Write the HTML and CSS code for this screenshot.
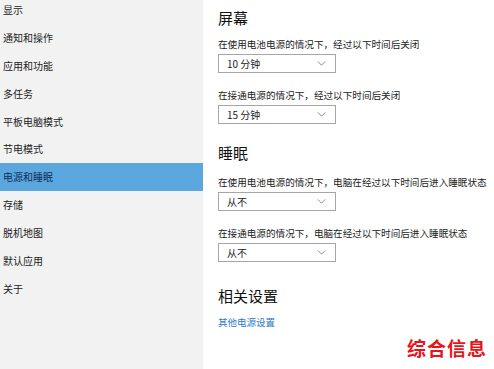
FILE: index.html
```html
<!DOCTYPE html>
<html>
<head>
    <link rel="stylesheet" href="styles.css">
</head>
<body>
    <div class="window">
        <div class="sidebar">
            <div class="nav-item">显示</div>
            <div class="nav-item">通知和操作</div>
            <div class="nav-item">应用和功能</div>
            <div class="nav-item">多任务</div>
            <div class="nav-item">平板电脑模式</div>
            <div class="nav-item">节电模式</div>
            <div class="nav-item active">电源和睡眠</div>
            <div class="nav-item">存储</div>
            <div class="nav-item">脱机地图</div>
            <div class="nav-item">默认应用</div>
            <div class="nav-item">关于</div>
        </div>

        <div class="content">
            <h2 class="section-title">屏幕</h2>
            <p class="label">在使用电池电源的情况下，经过以下时间后关闭</p>
            <div class="select"><span>10 分钟</span><svg class="chevron" viewBox="0 0 10 6"><path d="M0.5 0.5 L5 5 L9.5 0.5" /></svg></div>
            <p class="label">在接通电源的情况下，经过以下时间后关闭</p>
            <div class="select"><span>15 分钟</span><svg class="chevron" viewBox="0 0 10 6"><path d="M0.5 0.5 L5 5 L9.5 0.5" /></svg></div>

            <h2 class="section-title second">睡眠</h2>
            <p class="label">在使用电池电源的情况下，电脑在经过以下时间后进入睡眠状态</p>
            <div class="select"><span>从不</span><svg class="chevron" viewBox="0 0 10 6"><path d="M0.5 0.5 L5 5 L9.5 0.5" /></svg></div>
            <p class="label">在接通电源的情况下，电脑在经过以下时间后进入睡眠状态</p>
            <div class="select"><span>从不</span><svg class="chevron" viewBox="0 0 10 6"><path d="M0.5 0.5 L5 5 L9.5 0.5" /></svg></div>

            <h2 class="section-title third">相关设置</h2>
            <a class="link" href="#">其他电源设置</a>
        </div>

        <div class="watermark">综合信息</div>
    </div>
</body>
</html>
```

FILE: styles.css
```css
body {
    margin: 0;
    font-family: "Noto Sans CJK SC", "Noto Sans", sans-serif;
    color: #1a1a1a;
    background: #ffffff;
}

.window {
    position: relative;
    display: grid;
    grid-template-columns: 203px 1fr;
    width: 494px;
    height: 369px;
    overflow: hidden;
}

.sidebar {
    background-color: #f2f2f2;
}

.nav-item {
    height: 27.9px;
    line-height: 27.9px;
    padding-left: 3px;
    font-size: 10px;
    color: #222;
}

.nav-item:first-child {
    margin-top: -4px;
}

.active {
    background-color: #5aa6dd;
    color: #10305a;
}

.content {
    padding-left: 15px;
}

.section-title {
    font-size: 15px;
    font-weight: normal;
    margin: 8px 0 0 0;
    line-height: 20px;
    color: #111;
}

.section-title.second {
    margin-top: 19px;
    padding-bottom: 3px;
}

.section-title.third {
    margin-top: 24px;
}

.label {
    font-size: 9.6px;
    margin: 9px 0 3px 0;
    line-height: 14px;
    color: #222;
}

.select {
    display: flex;
    align-items: center;
    justify-content: space-between;
    width: 99px;
    height: 17px;
    border: 1px solid #a6a6a6;
    padding: 0 9px 0 8px;
    font-size: 10px;
    color: #222;
    margin-bottom: 15px;
}

.chevron {
    width: 9px;
    height: 5px;
    fill: none;
    stroke: #777;
    stroke-width: 1;
}

.link {
    display: block;
    margin-top: 9px;
    font-size: 9.5px;
    color: #2a7ad0;
    text-decoration: none;
}

.watermark {
    position: absolute;
    right: 7px;
    bottom: 8px;
    font-size: 19px;
    font-weight: bold;
    color: #e8141c;
    letter-spacing: 1px;
    text-shadow: 0 0 2px #fff;
}
```
